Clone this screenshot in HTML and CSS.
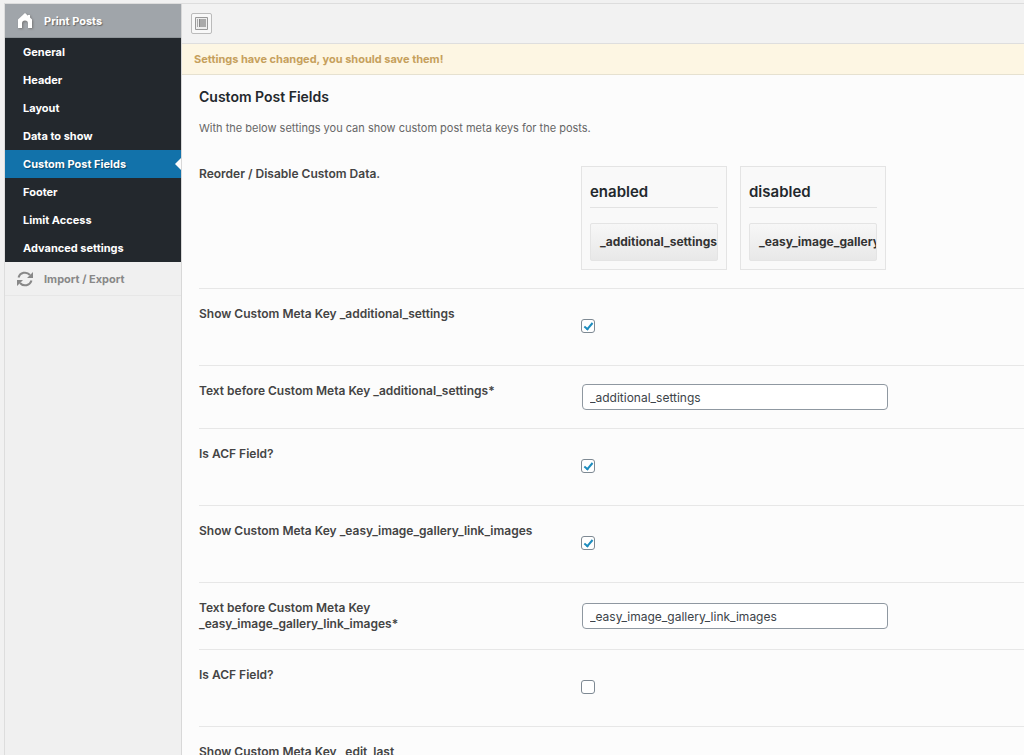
FILE: index.html
```html
<!DOCTYPE html>
<html lang="en">
<head>
    <meta charset="UTF-8">
    <meta name="viewport" content="width=device-width, initial-scale=1.0">
    <title>Print Posts - Custom Post Fields</title>
    <link rel="stylesheet" href="styles.css">
</head>
<body>
    <div class="panel">
        <nav class="sidebar">
            <a href="#" class="group group-open">
                <svg class="icon icon-shadow" viewBox="0 0 16 16"><path fill="#fff" d="M8 0L1 6.500V15h4v-4.500a3 3 0 0 1 6 0V15h4V6.500L13 4.600V2h-2v.8z"/></svg>
                Print Posts
            </a>
            <ul class="submenu">
                <li><a href="#">General</a></li>
                <li><a href="#">Header</a></li>
                <li><a href="#">Layout</a></li>
                <li><a href="#">Data to show</a></li>
                <li><a href="#" class="active">Custom Post Fields</a></li>
                <li><a href="#">Footer</a></li>
                <li><a href="#">Limit Access</a></li>
                <li><a href="#">Advanced settings</a></li>
            </ul>
            <a href="#" class="group">
                <svg class="icon" viewBox="0 0 16 16"><path fill="none" stroke="#888" stroke-width="2" d="M1.500 6.500A6.700 6.700 0 0 1 13 4M14.500 9.500A6.700 6.700 0 0 1 3 12"/><path fill="#888" d="M16 1v6h-6zM0 15V9h6z"/></svg>
                Import / Export
            </a>
        </nav>

        <main class="main">
            <div class="toolbar">
                <button type="button" class="expand" aria-label="Expand options">
                    <svg width="13" height="13" viewBox="0 0 13 13"><path fill="#eee" stroke="#999" d="M.5.5h12v12H.5z"/><path fill="#aaa" d="M2 2h1v8H2zM5 2h6v8H5z"/><path stroke="#888" d="M4.500 2v8"/></svg>
                </button>
            </div>
            <div class="notice">Settings have changed, you should save them!</div>

            <form class="content">
                <h2>Custom Post Fields</h2>
                <p class="description">With the below settings you can show custom post meta keys for the posts.</p>

                <div class="row row-sorter">
                    <div class="label">Reorder / Disable Custom Data.</div>
                    <div class="sorter">
                        <div class="list">
                            <h3>enabled</h3>
                            <div class="item">_additional_settings</div>
                        </div>
                        <div class="list">
                            <h3>disabled</h3>
                            <div class="item">_easy_image_gallery_link_images</div>
                        </div>
                    </div>
                </div>
                <div class="row">
                    <label class="label" for="show-additional">Show Custom Meta Key _additional_settings</label>
                    <div class="field field-check"><input type="checkbox" id="show-additional" checked></div>
                </div>
                <div class="row">
                    <label class="label" for="text-additional">Text before Custom Meta Key _additional_settings*</label>
                    <div class="field"><input type="text" id="text-additional" value="_additional_settings"></div>
                </div>
                <div class="row">
                    <label class="label" for="acf-additional">Is ACF Field?</label>
                    <div class="field field-check"><input type="checkbox" id="acf-additional" checked></div>
                </div>
                <div class="row">
                    <label class="label" for="show-gallery">Show Custom Meta Key _easy_image_gallery_link_images</label>
                    <div class="field field-check"><input type="checkbox" id="show-gallery" checked></div>
                </div>
                <div class="row">
                    <label class="label" for="text-gallery">Text before Custom Meta Key _easy_image_gallery_link_images*</label>
                    <div class="field"><input type="text" id="text-gallery" value="_easy_image_gallery_link_images"></div>
                </div>
                <div class="row">
                    <label class="label" for="acf-gallery">Is ACF Field?</label>
                    <div class="field field-check"><input type="checkbox" id="acf-gallery"></div>
                </div>
                <div class="row">
                    <label class="label" for="show-edit-last">Show Custom Meta Key _edit_last</label>
                    <div class="field field-check"><input type="checkbox" id="show-edit-last"></div>
                </div>
            </form>
        </main>
    </div>
</body>
</html>
```
FILE: styles.css
```css
* {
    box-sizing: border-box;
}
html {
    scrollbar-width: none;
}
body {
    margin: 0;
    padding: 3px 0 0 4px;
    background: #f1f1f1;
    color: #444;
    font-family: Inter, "Liberation Sans", sans-serif;
    font-size: 12px;
    line-height: 16px;
}
.panel {
    display: flex;
    border-top: 1px solid #ddd;
    border-left: 1px solid #ddd;
}

/* Sidebar */
.sidebar {
    flex: 0 0 177px;
    border-right: 1px solid #d8d8d8;
    background: #f0f0f0;
    font-size: 11px;
    font-weight: 700;
}
.sidebar a {
    text-decoration: none;
}
.group {
    display: flex;
    align-items: center;
    gap: 11px;
    height: 34px;
    padding: 0 12px;
    border-bottom: 1px solid #e7e7e7;
    color: #888;
}
.group-open {
    border-bottom-color: #8e9498;
    background: #a0a5aa;
    color: #fff;
    text-shadow: 1px 1px 1px #666;
}
.icon {
    width: 16px;
    height: 16px;
}
.icon-shadow {
    filter: drop-shadow(1px 1px 1px #777);
}
.submenu {
    margin: 0;
    padding: 0;
    background: #23282d;
    list-style: none;
}
.submenu a {
    display: block;
    position: relative;
    padding: 6px 18px;
    color: #fff;
}
.submenu .active {
    background: #1272aa;
    text-shadow: 1px 1px 1px #0a4468;
}
.submenu .active::after {
    content: "";
    position: absolute;
    top: 8px;
    right: 0;
    border: 6px solid transparent;
    border-left: 0;
    border-right-color: #fcfcfc;
}

/* Main area */
.main {
    flex: 1;
    min-width: 0;
    background: #fcfcfc;
}
.toolbar {
    height: 40px;
    padding: 9px;
    border-bottom: 1px solid #dedede;
    background: #f2f2f2;
}
.expand {
    display: flex;
    align-items: center;
    justify-content: center;
    width: 21px;
    height: 21px;
    padding: 0;
    border: 1px solid #bbb;
    border-radius: 2px;
    background: #f8f8f8;
}
.notice {
    padding: 7px 12px;
    border-bottom: 1px solid #e6e1d0;
    background: #fdf6e3;
    color: #c6a05c;
    font-size: 11px;
    font-weight: 700;
}
.content {
    padding: 12px 0 0 17px;
}
h2 {
    margin: 0;
    color: #23282d;
    font-size: 14px;
    font-weight: 600;
    line-height: 20px;
}
.description {
    margin: 13px 0 12px;
    color: #666;
    font-size: 11px;
}

/* Option rows */
.row {
    display: grid;
    grid-template-columns: 352px 1fr;
    column-gap: 30px;
    border-top: 1px solid #e7e7e7;
}
.row-sorter {
    border-top: 0;
}
.label {
    padding: 17px 0;
    font-weight: 600;
}
.row-sorter .label {
    padding-top: 18px;
}
.field {
    align-self: center;
    padding: 18px 0 18px 1px;
}
.field-check {
    padding: 30px 0 32px;
}
input[type="text"] {
    display: block;
    width: 306px;
    height: 26px;
    padding: 0 7px;
    border: 1px solid #8f98a1;
    border-radius: 4px;
    background: #fff;
    color: #3c4349;
    font: inherit;
}
input[type="checkbox"] {
    display: block;
    appearance: none;
    width: 14px;
    height: 14px;
    margin: 0;
    border: 1px solid #7e8993;
    border-radius: 3px;
    background: #fff;
}
input[type="checkbox"]:checked::before {
    content: "";
    display: block;
    box-sizing: border-box;
    width: 5px;
    height: 9px;
    margin: 1px 0 0 4px;
    border: solid #1e8cbe;
    border-width: 0 2px 2px 0;
    transform: rotate(40deg);
}

/* Enabled / disabled lists */
.sorter {
    display: flex;
    gap: 13px;
    padding: 18px 0;
}
.list {
    width: 146px;
    height: 104px;
    padding: 15px 8px 8px;
    border: 1px solid #e4e4e4;
    background: #f9f9f9;
}
h3 {
    margin: 0 0 15px;
    padding-bottom: 5px;
    border-bottom: 1px solid #e3e3e3;
    color: #23282d;
    font-size: 15px;
    font-weight: 600;
    line-height: 20px;
}
.item {
    height: 38px;
    padding: 10px 9px;
    border: 1px solid #e4e4e4;
    border-radius: 2px;
    background: linear-gradient(#f7f7f7, #e8e8e8);
    color: #333;
    font-weight: 700;
    white-space: nowrap;
    overflow: hidden;
}
```
